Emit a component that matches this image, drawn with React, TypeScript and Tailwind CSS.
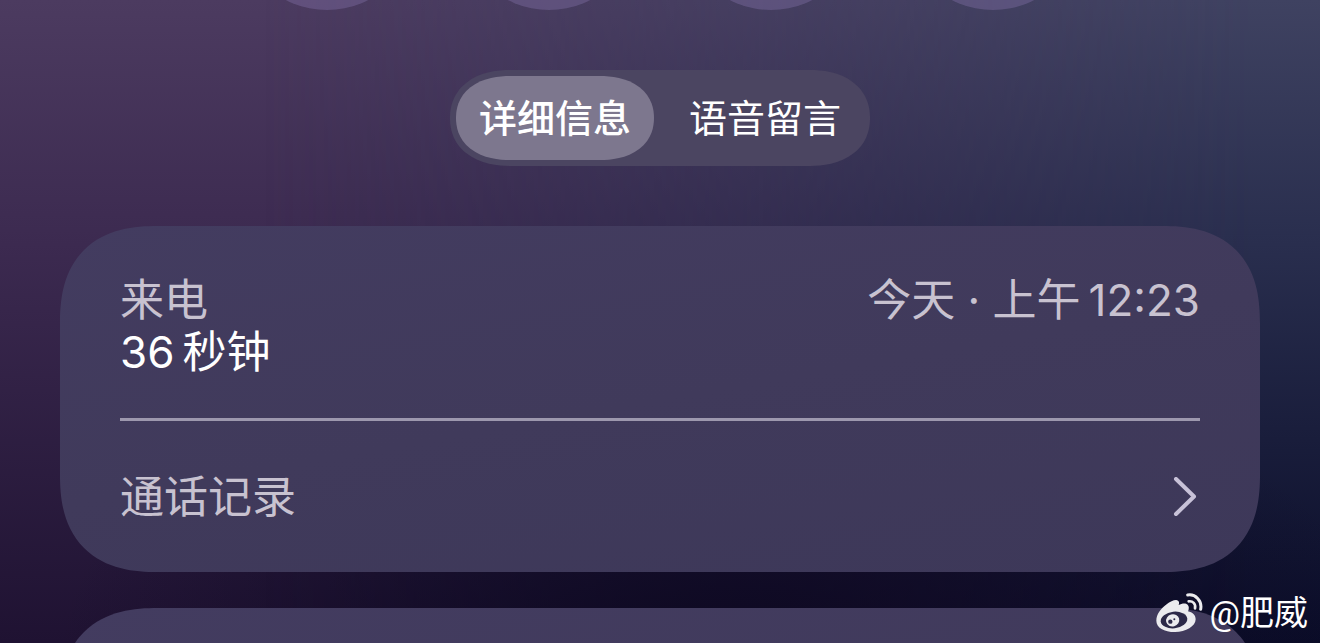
import { useState } from "react";

const tabs = ["详细信息", "语音留言"];
const actions = ["a", "b", "c", "d"];

const cardClass =
  "rounded-[98px] [corner-shape:superellipse(1.3)] bg-linear-170 from-[#433c60] via-[#403a5b] to-[#3d3859]";

function WeiboLogo() {
  return (
    <svg className="h-[40px] w-[47px]" viewBox="14 20 141 120" fill="none" aria-hidden="true">
      <path
        d="M15 103C15 84 28 67 46 54C58 45 73 38 80 43C84 46 84 51 82 56C91 51 103 49 109 55C114 60 113 68 110 75C123 78 133 86 133 99C133 120 103 137 71 137C38 137 15 124 15 103Z"
        fill="#ebebee"
      />
      <ellipse cx="68" cy="101" rx="40" ry="25" transform="rotate(-6 68 101)" fill="#2c2948" />
      <ellipse cx="64" cy="102" rx="20" ry="18" transform="rotate(-15 64 102)" fill="#ebebee" />
      <circle cx="57" cy="106" r="6.500" fill="#2c2948" />
      <circle cx="69" cy="99" r="3" fill="#2c2948" />
      <path d="M109 26C132 22 153 43 148 69" stroke="#ebebee" strokeWidth="9" strokeLinecap="round" />
      <path d="M112 45C124 43 134 53 131 66" stroke="#ebebee" strokeWidth="8" strokeLinecap="round" />
    </svg>
  );
}

export default function App() {
  const [active, setActive] = useState(0);

  return (
    <div className="relative isolate flex h-screen flex-col overflow-hidden bg-linear-to-b from-[#4c3b60] via-[#3c2a50] via-38% to-[#1f1232] font-['Inter','Noto_Sans_CJK_SC',sans-serif]">
      <div
        aria-hidden="true"
        className="absolute inset-0 -z-10 bg-linear-to-b from-[#3f4261] via-[#292e4e] via-38% to-[#0a0c28] [mask-image:linear-gradient(to_right,transparent_20%,black_95%)]"
      />
      <div
        aria-hidden="true"
        className="absolute inset-x-0 bottom-0 -z-10 h-1/2 bg-[radial-gradient(ellipse_at_55%_100%,#0e0922_0%,transparent_65%)]"
      />

      <div aria-hidden="true" className="flex h-[10px] shrink-0 items-end justify-center gap-[42px]">
        {actions.map((id) => (
          <span key={id} className="size-[180px] shrink-0 rounded-full bg-[#8270a8]/40" />
        ))}
      </div>

      <main className="flex flex-col px-[60px] pt-[60px]">
        <div
          role="tablist"
          className="flex h-[96px] w-[420px] shrink-0 gap-[12px] self-center rounded-[60px/48px] [corner-shape:superellipse(1.15)] bg-[#4b4561] p-[6px]"
        >
          {tabs.map((label, i) => (
            <button
              key={label}
              type="button"
              role="tab"
              aria-selected={i === active}
              onClick={() => setActive(i)}
              className={
                i === active
                  ? "flex-1 rounded-[54px/42px] [corner-shape:superellipse(1.15)] bg-[#7d778e] text-[38px] font-medium text-white"
                  : "flex-1 text-[38px] text-white"
              }
            >
              {label}
            </button>
          ))}
        </div>

        <section className={`mt-[60px] h-[346px] shrink-0 px-[60px] text-[44px] leading-[52px] text-[#c8c2d0] ${cardClass}`}>
          <div className="flex h-[195px] justify-between border-b-3 border-[#9d98ae] pt-[48px]">
            <div>
              <p>来电</p>
              <p className="flex gap-[8px] text-white">
                <span>36</span>
                <span>秒钟</span>
              </p>
            </div>
            <p className="flex gap-[8px]">
              <span>今天 · 上午</span>
              <time>12:23</time>
            </p>
          </div>
          <a href="#history" className="flex h-[151px] items-center justify-between">
            <span>通话记录</span>
            <svg className="h-[40px] w-[28px]" viewBox="0 0 28 40" fill="none" aria-hidden="true">
              <path d="M4 2L22 19.500L4 37" stroke="#c8c2d8" strokeWidth="4" strokeLinecap="round" strokeLinejoin="round" />
            </svg>
          </a>
        </section>

        <section className={`mt-[36px] h-[346px] shrink-0 ${cardClass}`} />
      </main>

      <div className="absolute right-[12px] bottom-[8px] flex items-center gap-[6px] font-['Roboto','Noto_Sans_CJK_SC',sans-serif] text-[34px] leading-[44px] text-white">
        <WeiboLogo />
        <span>@肥威</span>
      </div>
    </div>
  );
}
